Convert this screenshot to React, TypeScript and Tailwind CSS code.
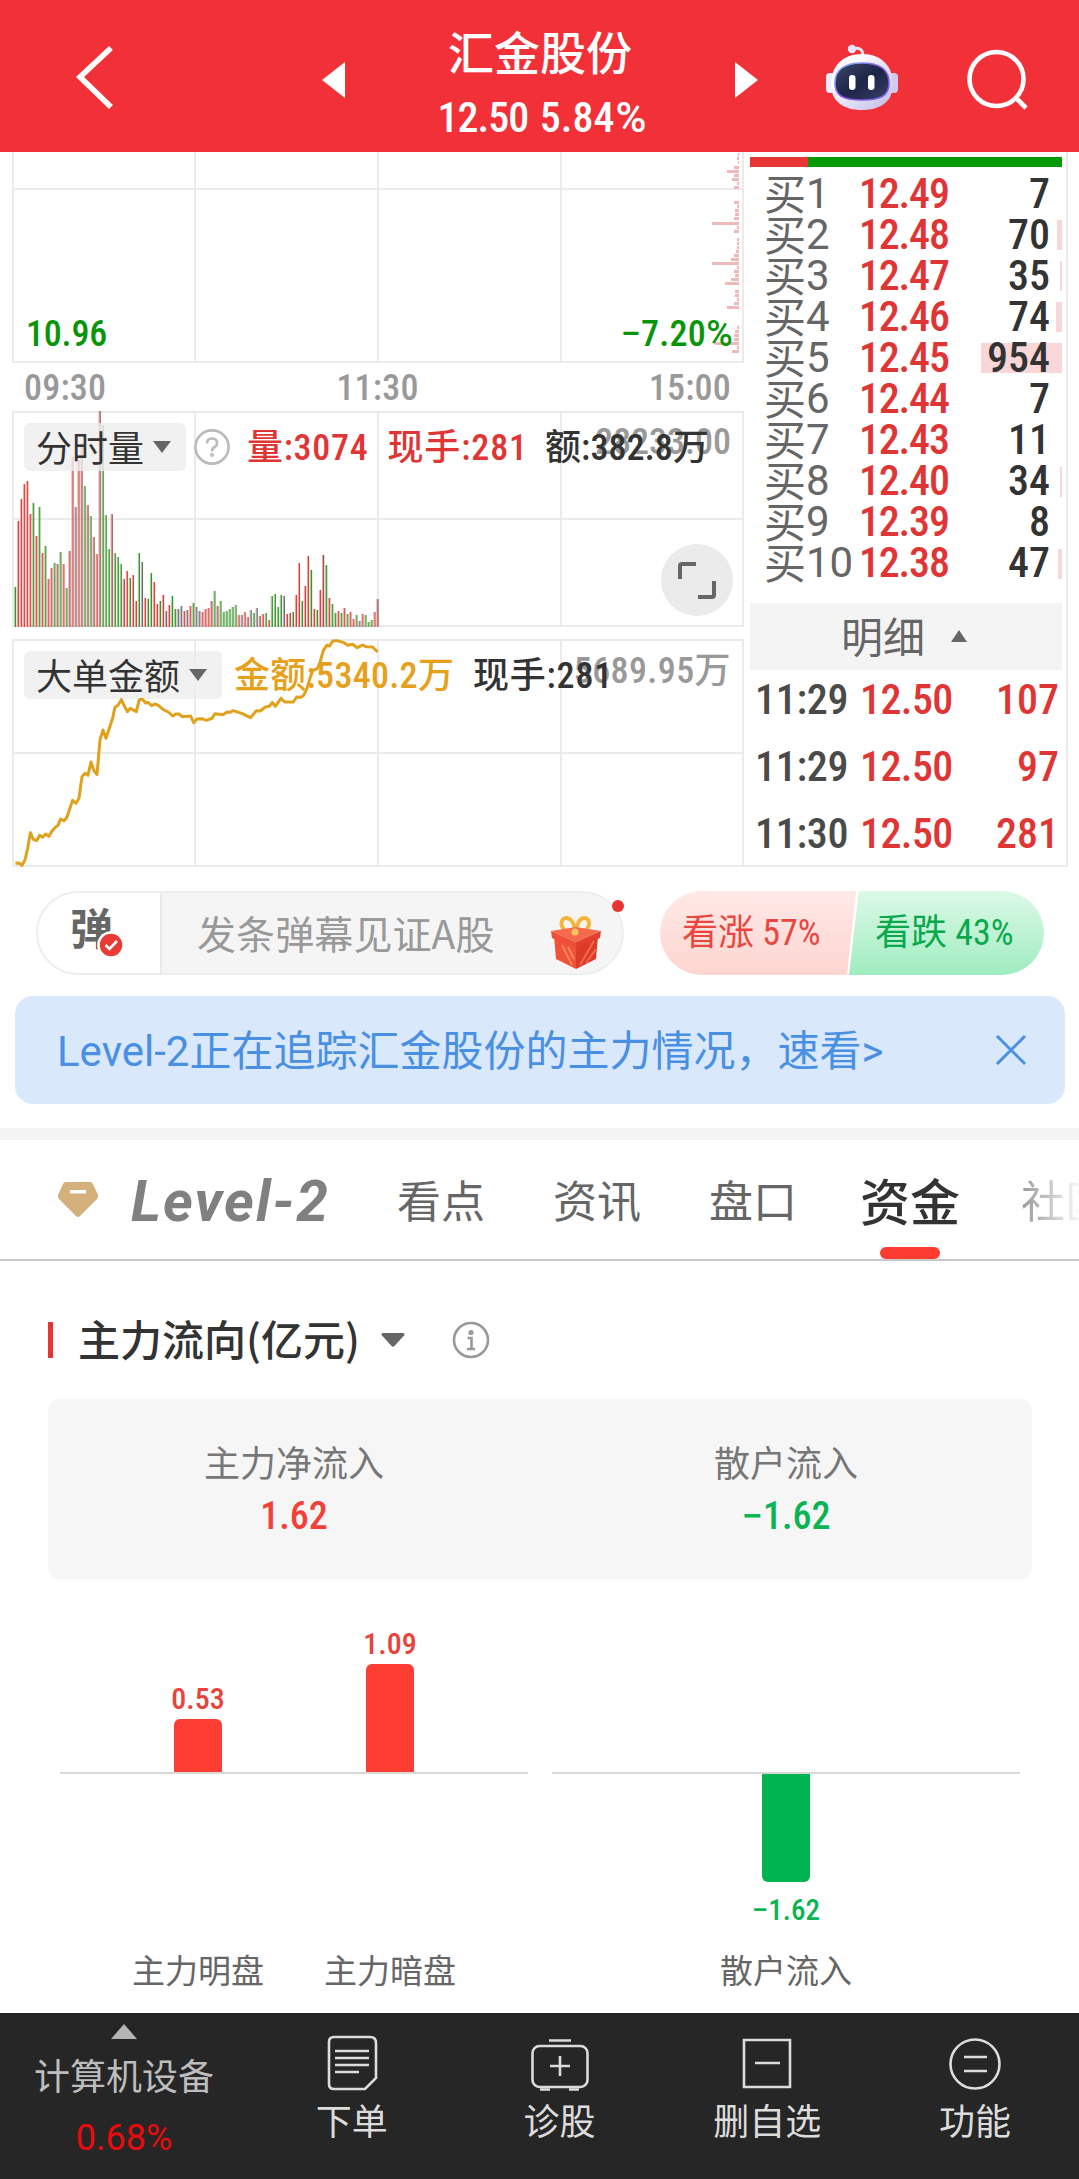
import { Fragment, ReactNode } from "react";

const bids = [
    { level: 1, price: "12.49", qty: 7, bar: 0 },
    { level: 2, price: "12.48", qty: 70, bar: 5 },
    { level: 3, price: "12.47", qty: 35, bar: 2 },
    { level: 4, price: "12.46", qty: 74, bar: 6 },
    { level: 5, price: "12.45", qty: 954, bar: 81 },
    { level: 6, price: "12.44", qty: 7, bar: 0 },
    { level: 7, price: "12.43", qty: 11, bar: 0 },
    { level: 8, price: "12.40", qty: 34, bar: 2 },
    { level: 9, price: "12.39", qty: 8, bar: 0 },
    { level: 10, price: "12.38", qty: 47, bar: 4 },
];

const trades = [
    { time: "11:29", price: "12.50", qty: 107 },
    { time: "11:29", price: "12.50", qty: 97 },
    { time: "11:30", price: "12.50", qty: 281 },
];

// one entry per minute: colour key + height
const volumes =
    "g40 r106 r128 r143 r146 r113 g124 r91 g120 r74 g81 r48 r59 g64 d63 g75 r63 g39 d76 r170 k120 r167 d184 g141 d122 g111 d90 r73 d216 g202 g112 g78 d113 g74 g70 g63 d48 r56 g49 r52 r26 g74 k65 r29 g28 g54 r45 r23 g26 r32 k16 r22 g31 g18 k18 k21 r16 k17 r21 g24 k20 k16 r15 r18 r19 d26 g36 d21 g26 g15 g16 g18 g20 g22 r12 k12 r15 d10 k17 g14 k19 d11 r13 g14 r7 g31 g33 g20 g32 k31 r13 r14 g15 r32 r64 g26 r41 r71 g57 r18 g17 r37 d72 g62 r29 g23 g14 r16 g14 r19 g13 r15 r8 g12 k6 r13 g12 g5 g7 r15 d28".split(" ");

const volumeColors: Record<string, string[]> = {
    r: ["#d9403f", "#f3a8a6"],
    d: ["#a04f50", "#dda3a3"],
    g: ["#3f8f2e", "#a5d79c"],
    k: ["#6d6a70", "#bdbbbf"],
};

const flowLine =
    "46,700 57,699 66,706 75,690 83,655 91,608 100,628 110,632 119,616 128,622 137,612 147,619 156,603 165,593 174,586 182,567 192,572 200,563 210,535 218,511 228,520 237,505 246,440 255,430 264,436 273,396 282,422 291,434 300,330 309,300 318,325 328,295 337,268 345,232 354,226 364,209 373,228 382,245 391,235 400,240 409,245 418,209 428,208 437,219 444,217 455,227 465,222 475,226 490,239 505,246 518,258 527,252 537,252 546,260 572,258 581,278 591,267 606,266 619,271 636,265 645,251 670,254 681,246 690,247 700,242 725,250 752,263 769,242 781,243 796,231 808,229 817,217 826,229 843,205 854,216 880,216 890,201 903,202 911,196 920,178 930,145 938,122 952,116 960,98 970,62 980,46 989,48 998,33 1010,32 1030,37 1043,46 1058,43 1072,53 1088,45 1098,50 1118,51 1133,66";

// [y, length] of the price distribution bars
const distribution = [
    [2, 1], [6, 2], [10, 1], [15, 5], [19, 12], [23, 5], [27, 7], [31, 2], [35, 5], [50, 5], [54, 2], [58, 4], [62, 4], [66, 5], [71, 27], [75, 2],
    [79, 5], [87, 2], [91, 2], [95, 2], [99, 3], [103, 5], [107, 8], [111, 27], [115, 2], [119, 5], [123, 4], [127, 8], [131, 14], [139, 4], [143, 4],
    [147, 2], [151, 5], [155, 12], [175, 2], [179, 4], [183, 5], [187, 5], [191, 24], [195, 2], [199, 7],
];

const Num = ({ className = "font-stretch-[85%]", children }: { className?: string; children: ReactNode }) => (
    <span className={`font-[Roboto,'Noto_Sans_CJK_SC',sans-serif] ${className}`}>{children}</span>
);

const Header = () => {
    return (
        <div className="flex h-[152px] bg-[#f23038] text-white">
            <svg className="ml-[69px] mt-10 h-[74px] w-[50px]" viewBox="0 0 50 74" fill="none">
                <path d="M42 8 L11 37 L42 67" stroke="white" strokeWidth="5.6" />
            </svg>
            <svg className="ml-[203px] mt-[62px] h-9 w-6" viewBox="0 0 24 36">
                <path d="M0 18 L23 0 V36 Z" fill="white" />
            </svg>
            <div className="ml-[44px] flex w-[300px] flex-col items-center pt-[27px]">
                <div className="text-[46px] font-medium leading-[46px]">汇金股份</div>
                <Num className="ml-[4px] mt-[21px] text-[42px] font-medium leading-[48px] font-stretch-[80%]">
                    <span className="tracking-[-1px]">12.50</span>&nbsp;<span className="ml-[2px]">5.84</span><span className="ml-px font-stretch-[105%]">%</span>
                </Num>
            </div>
            <svg className="ml-[45px] mt-[62px] h-9 w-6" viewBox="0 0 24 36">
                <path d="M0 0 L23 18 L0 36 Z" fill="white" />
            </svg>
            <Robot />
            <svg className="ml-[66px] mt-[46px] h-[66px] w-[66px]" viewBox="0 0 66 66" fill="none" stroke="white" strokeWidth="4.6">
                <circle cx="31.5" cy="33" r="27" />
                <path d="M50 51 L61 62" />
            </svg>
        </div>
    );
};

const Robot = () => {
    return (
        <svg className="ml-[66px] mt-[42px] h-[70px] w-[74px]" viewBox="0 0 74 70" fill="none">
            <defs>
                <linearGradient id="shell" x1="0" y1="0" x2="1" y2="1">
                    <stop offset="0.3" stopColor="#fbfaff" />
                    <stop offset="1" stopColor="#bdb9e6" />
                </linearGradient>
                <linearGradient id="rim" x1="0" y1="0" x2="1" y2="1">
                    <stop offset="0" stopColor="#7fd0f2" />
                    <stop offset="0.5" stopColor="#8a4be8" />
                    <stop offset="1" stopColor="#6f62e0" />
                </linearGradient>
                <linearGradient id="visor" x1="0" y1="0" x2="1" y2="1">
                    <stop offset="0" stopColor="#3d4769" />
                    <stop offset="0.5" stopColor="#1d2647" />
                    <stop offset="1" stopColor="#363f66" />
                </linearGradient>
            </defs>
            <path d="M27 7 Q38 4 38 14" stroke="#e4dff5" strokeWidth="3" />
            <circle cx="27" cy="7" r="4.2" fill="#e7e3f8" />
            <rect x="1" y="31" width="9" height="20" rx="4" fill="#f0eefc" />
            <rect x="64" y="31" width="9" height="20" rx="4" fill="#cfcbf0" />
            <path d="M37 12 C57 12 68 25 68 42 C68 60 55 68 37 68 C19 68 6 60 6 42 C6 25 17 12 37 12Z" fill="url(#shell)" />
            <path d="M37 21 C55 21 64 28 64 41 C64 53 57 58 37 58 C17 58 10 53 10 41 C10 28 19 21 37 21Z" fill="url(#visor)" stroke="url(#rim)" strokeWidth="1.6" />
            <rect x="24" y="33" width="6.5" height="15" rx="3.2" fill="white" />
            <rect x="43" y="33" width="6.5" height="15" rx="3.2" fill="white" />
        </svg>
    );
};

const Grid = ({ height, mid, top = true, children }: { height: number; mid: number; top?: boolean; children?: ReactNode }) => {
    return (
        <svg className="block w-[732px]" style={{ height }} viewBox={`0 0 732 ${height}`}>
            <g fill="#ebebeb">
                {[0, 182, 365, 548, 730].map((x) => (
                    <rect key={x} x={x} y="0" width="2" height={height} />
                ))}
                {top && <rect x="0" y="0" width="732" height="2" />}
                <rect x="0" y={mid} width="732" height="2" />
                <rect x="0" y={height - 2} width="732" height="2" />
            </g>
            {children}
        </svg>
    );
};

const Select = ({ label }: { label: string }) => {
    return (
        <div className="flex h-12 items-center rounded-md bg-[#eeeeee]/80 pl-[12px] pr-[15px]">
            <span className="pb-[3px] text-[36px] leading-none text-[#333]">{label}</span>
            <svg className="ml-[9px] h-3 w-[18px]" viewBox="0 0 18 12">
                <path d="M0 0 H18 L9 12 Z" fill="#666" />
            </svg>
        </div>
    );
};

const Charts = () => {
    return (
        <div className="ml-3 w-[732px]">
            <div className="relative">
                <Grid height={211} mid={36} top={false}>
                    {distribution.map(([y, w]) => (
                        <rect key={y} x={727 - w} y={y - 1} width={w} height="3" fill="#efb9bb" />
                    ))}
                </Grid>
                <Num className="absolute bottom-[8px] left-[14px] text-[36px] font-medium leading-[42px] tracking-[-0.2px] text-[#099509] font-stretch-[84%]">10.96</Num>
                <Num className="absolute bottom-[8px] right-[11px] text-[36px] font-medium leading-[42px] tracking-[0.3px] text-[#099509] font-stretch-[84%]">
                    <span className="font-stretch-[100%]">−</span>7.20<span className="font-stretch-[100%]">%</span>
                </Num>
            </div>
            <div className="flex h-12 items-center justify-between pl-3 pr-[13px] pt-[2px] text-[36px] font-medium leading-none tracking-[0.2px] text-[#999]">
                <Num>09:30</Num>
                <Num>11:30</Num>
                <Num>15:00</Num>
            </div>
            <div className="relative">
                <Grid height={216} mid={107}>
                    {volumes.map((v, i) => {
                        const h = Number(v.slice(1));
                        const [dark, light] = volumeColors[v[0]];
                        return (
                            <Fragment key={i}>
                                <rect x={2 + i * 3.02} y={216 - h} width="1" height={h} fill={light} />
                                <rect x={3 + i * 3.02} y={216 - h} width="1.2" height={h} fill={dark} />
                            </Fragment>
                        );
                    })}
                </Grid>
                <div className="absolute left-3 top-3 flex items-center text-[36px] leading-none">
                    <Select label="分时量" />
                    <svg className="ml-2 h-9 w-9" viewBox="0 0 36 36" fill="none" stroke="#bbb" strokeWidth="2.6">
                        <circle cx="18" cy="18" r="16.6" />
                        <path d="M13 14.5 Q13 9.5 18 9.5 Q23 9.5 23 14 Q23 17 20 18.5 Q18 19.5 18 22.5" />
                        <circle cx="18" cy="26" r="0.8" />
                    </svg>
                    <Num className="ml-[17px] whitespace-nowrap pt-px font-medium tracking-[0.7px] text-[#e03535] font-stretch-[85%]">量:3074</Num>
                    <Num className="ml-[19px] whitespace-nowrap pt-px font-medium tracking-[0.9px] text-[#e03535] font-stretch-[85%]">现手:281</Num>
                </div>
                <Num className="absolute right-[13px] top-[10px] text-[36px] font-medium leading-[42px] text-[#999] font-stretch-[84%]">28233.00</Num>
                <Num className="absolute left-[533px] top-[16px] whitespace-nowrap text-[36px] font-medium leading-[42px] tracking-[0.1px] text-[#333] font-stretch-[85%]">额:382.8万</Num>
                <div className="absolute bottom-[11px] right-[11px] h-[72px] w-[72px] rounded-full bg-[#ebebeb]">
                    <svg className="h-full w-full" viewBox="0 0 72 72" fill="none" stroke="#666" strokeWidth="4">
                        <path d="M35 20 H21 Q19 20 19 22 V35" />
                        <path d="M37 53 H51 Q53 53 53 51 V37" />
                    </svg>
                </div>
            </div>
            <div className="relative mt-3">
                <Grid height={228} mid={113} />
                <div className="absolute left-3 top-3 flex items-center text-[36px] leading-none">
                    <Select label="大单金额" />
                    <Num className="ml-[12px] whitespace-nowrap pt-px font-medium tracking-[0.3px] text-[#e6a019] font-stretch-[85%]">金额:5340.2万</Num>
                </div>
                <Num className="absolute right-[13px] top-[11px] whitespace-nowrap text-[36px] font-medium leading-[42px] tracking-[0.4px] text-[#999] font-stretch-[85%]">5689.95万</Num>
                <Num className="absolute left-[461px] top-[16px] whitespace-nowrap text-[36px] font-medium leading-[42px] tracking-[0.8px] text-[#333] font-stretch-[85%]">现手:281</Num>
                <svg className="absolute left-0 top-0 h-[228px] w-[732px]" viewBox="0 0 732 228" fill="none">
                    <polyline points={flowLine} transform="translate(-12 -9) scale(0.3333)" stroke="#e0a11c" strokeWidth="9" strokeLinejoin="round" />
                </svg>
            </div>
        </div>
    );
};

const OrderBook = () => {
    return (
        <div className="flex w-[324px] flex-col border-b-2 border-r-2 border-[#ebebeb] pl-[6px] pr-[4px] pt-[5px]">
            <div className="flex h-[10px] w-[312px] shrink-0">
                <div className="w-[58px] bg-[#e83433]" />
                <div className="flex-1 bg-[#069806]" />
            </div>
            <div className="mt-[6px]">
                {bids.map((bid) => (
                    <div key={bid.level} className="relative flex h-[41.1px] w-[312px] items-center pl-[14px] text-[42px] leading-none">
                        <div className="absolute right-0 top-[6px] h-[30px] bg-[#f9d6d7]" style={{ width: bid.bar }} />
                        <div className="flex w-[95px] items-center whitespace-nowrap text-[#666]">
                            <span className="pb-[4px]">买</span>
                            <Num className="font-stretch-[98%]">{bid.level}</Num>
                        </div>
                        <Num className="font-medium tracking-[-1.2px] text-[#e03535] font-stretch-[79%]">{bid.price}</Num>
                        <Num className="relative ml-auto mr-[12px] font-medium text-[#333] font-stretch-[85%]">{bid.qty}</Num>
                    </div>
                ))}
            </div>
            <div className="mt-[19px] flex h-[67px] w-[312px] shrink-0 items-center bg-[#f4f4f4] pl-[91px]">
                <span className="pb-[2px] text-[42px] leading-none text-[#666]">明细</span>
                <svg className="ml-[26px] h-3 w-4" viewBox="0 0 16 12">
                    <path d="M8 0 L16 12 H0 Z" fill="#666" />
                </svg>
            </div>
            {trades.map((trade, i) => (
                <div key={i} className="flex h-[67px] w-[312px] shrink-0 items-center pb-[7px] pl-[5px] text-[42px] font-medium leading-none">
                    <Num className="w-[105px] tracking-[-0.3px] text-[#4a4a4a] font-stretch-[84%]">{trade.time}</Num>
                    <Num className="tracking-[-0.6px] text-[#e03535] font-stretch-[81%]">{trade.price}</Num>
                    <Num className="ml-auto mr-[3px] text-[#e03535] font-stretch-[85%]">{trade.qty}</Num>
                </div>
            ))}
        </div>
    );
};

const Gift = () => {
    return (
        <svg className="h-[54px] w-[52px]" viewBox="0 0 52 54">
            <path d="M25 18 C8 18 9 2 17 3 C22 4 25 10 25 18 C26 10 30 3 34 3 C42 3 42 18 25 18Z" fill="none" stroke="#f5b53a" strokeWidth="4" />
            <path d="M4 21 L26 31 V54 L6 44Z" fill="#f0523a" />
            <path d="M48 21 L26 31 V54 L46 44Z" fill="#dd3a28" />
            <path d="M1 16 L26 12 L51 16 L26 27Z" fill="#f5694c" />
            <path d="M1 16 L26 27 V33 L2 23Z" fill="#ee4f38" />
            <path d="M51 16 L26 27 V33 L50 23Z" fill="#e2402d" />
            <path d="M12 30 L22 50 M18 32 L24 44" stroke="#f78360" strokeWidth="2" />
            <path d="M44 26 L30 50 M46 34 L36 48" stroke="#f0694c" strokeWidth="2" />
            <circle cx="25" cy="17" r="3.5" fill="#f8c65a" />
        </svg>
    );
};

const CommentBar = () => {
    return (
        <div className="flex pl-9 pt-6">
            <div className="relative flex h-[84px] w-[588px] items-center rounded-full border-2 border-[#eeeeee] bg-[#f5f5f5]">
                <div className="relative flex h-full w-[124px] items-center rounded-l-full border-r-2 border-[#eaeaea] bg-white pl-[32px]">
                    <span className="mb-[13px] text-[43px] font-bold leading-none text-[#666]">弹</span>
                    <svg className="absolute left-[59px] top-[38px] h-7 w-7" viewBox="0 0 28 28">
                        <circle cx="14" cy="14" r="12.5" fill="#e93b35" stroke="white" strokeWidth="2.5" />
                        <path d="M8.5 14 L12.5 18 L20 10" fill="none" stroke="white" strokeWidth="2.6" />
                    </svg>
                </div>
                <span className="ml-[35px] whitespace-nowrap pb-[2px] text-[39px] leading-none tracking-[0.1px] text-[#999]">发条弹幕见证A股</span>
                <div className="absolute left-[512px] top-[22px]">
                    <Gift />
                </div>
                <div className="absolute -right-[2px] top-[7px] h-3 w-3 rounded-full bg-[#e83433]" />
            </div>
            <div className="ml-9 flex h-[84px] w-[384px] text-[36px] leading-none">
                <div className="flex w-[199px] items-center whitespace-nowrap rounded-l-full bg-gradient-to-b from-[#ffe9e7] to-[#fdd5d0] pl-[22px] text-[#e94640] [clip-path:polygon(0_0,98.5%_0,94%_100%,0_100%)]">
                    <Num>看涨 57%</Num>
                </div>
                <div className="-ml-[10px] flex flex-1 items-center whitespace-nowrap rounded-r-full bg-gradient-to-b from-[#dcf9e8] to-[#9fecc0] pl-[26px] text-[#0ba94d] [clip-path:polygon(5%_0,100%_0,100%_100%,0_100%)]">
                    <Num>看跌 43%</Num>
                </div>
            </div>
        </div>
    );
};

const Notice = () => {
    return (
        <div className="mx-[15px] mt-[21px] flex h-[108px] w-[1050px] items-center rounded-[18px] bg-[#dae8fc] pl-[42px] text-[#4a90e2]">
            <Num className="whitespace-nowrap pt-[4px] text-[42px] leading-none">
                Level-2正在追踪汇金股份的主力情况，速看&gt;
            </Num>
            <svg className="ml-auto mr-[38px] h-8 w-8" viewBox="0 0 32 32" fill="none" stroke="#4a90e2" strokeWidth="3">
                <path d="M2 2 L30 30 M30 2 L2 30" />
            </svg>
        </div>
    );
};

const Tabs = () => {
    return (
        <div className="mt-6 overflow-hidden border-t-[12px] border-[#f4f4f4]">
            <div className="flex h-[121px] w-[1200px] border-b-2 border-[#c8c8c8] text-[44px] leading-none text-[#666]">
                <svg className="ml-[57px] mt-[40px] h-10 w-[42px]" viewBox="0 0 42 40">
                    <path d="M9 2 H33 Q35 2 36 4 L41 15 Q41.500 17 40 19 L23 36 Q21 38 19 36 L2 19 Q0.500 17 1 15 L6 4 Q7 2 9 2Z" fill="#d3b07c" />
                    <rect x="13" y="10" width="16" height="3.500" fill="white" />
                </svg>
                <span className="ml-[32px] mt-[33px] w-[266px] whitespace-nowrap font-[Roboto,sans-serif] text-[57px] font-bold italic tracking-[2px] text-[#808080]">Level-2</span>
                <span className="mt-[37px] w-[156px]">看点</span>
                <span className="mt-[37px] w-[156px]">资讯</span>
                <span className="mt-[37px] w-[151px]">盘口</span>
                <div className="flex w-[100px] flex-col items-center justify-between pt-[34px] text-[50px] font-medium text-[#333]">
                    <span>资金</span>
                    <div className="h-3 w-[60px] rounded-t-md rounded-b-md bg-[#fd3b31]" />
                </div>
                <span className="ml-[61px] mt-[37px] bg-gradient-to-r from-[#999] to-white to-[62px] bg-clip-text text-transparent">社区</span>
            </div>
        </div>
    );
};

const Funds = () => {
    return (
        <div className="h-[752px] px-12">
            <div className="flex h-[100px] items-center pt-[57px]">
                <div className="h-9 w-[5px] bg-[#e83433]" />
                <span className="ml-[25px] pb-[3px] text-[42px] font-medium leading-[42px] text-[#333]">主力流向(亿元)</span>
                <svg className="ml-[21px] h-[14px] w-6" viewBox="0 0 24 14">
                    <path d="M2 0 H22 Q24.500 0.500 23 2.500 L13.500 13 Q12 14.500 10.500 13 L1 2.500 Q-0.500 0.500 2 0Z" fill="#666" />
                </svg>
                <svg className="ml-[47px] h-[38px] w-[38px]" viewBox="0 0 38 38" fill="none" stroke="#999" strokeWidth="2.6">
                    <circle cx="19" cy="19" r="17" />
                    <circle cx="19" cy="11.500" r="2.600" fill="#999" stroke="none" />
                    <path d="M15.500 17 H19.500 V28 M15 28 H23" />
                </svg>
            </div>
            <div className="mt-[38px] flex h-[180px] w-[984px] rounded-xl bg-[#f6f6f6] text-center">
                <div className="flex flex-1 flex-col items-center pt-[44px]">
                    <span className="text-[36px] leading-[36px] text-[#777]">主力净流入</span>
                    <Num className="mt-[16px] text-[38px] font-medium leading-[42px] text-[#f3413a] font-stretch-[83%]">1.62</Num>
                </div>
                <div className="flex flex-1 flex-col items-center pt-[44px]">
                    <span className="text-[36px] leading-[36px] text-[#777]">散户流入</span>
                    <Num className="mt-[16px] text-[38px] font-medium leading-[42px] text-[#0ab452] font-stretch-[83%]"><span className="font-stretch-[100%]">−</span>1.62</Num>
                </div>
            </div>
            <div className="flex justify-between px-3">
                <div className="w-[468px]">
                    <div className="flex h-[195px] items-end gap-[84px] border-b-2 border-[#d8d8d8] pl-[84px]">
                        <FlowBar value="0.53" height={53} />
                        <FlowBar value="1.09" height={108} />
                    </div>
                    <div className="mt-[179px] flex gap-[60px] whitespace-nowrap pl-[72px] text-[33px] leading-[33px] text-[#666]">
                        <span>主力明盘</span>
                        <span>主力暗盘</span>
                    </div>
                </div>
                <div className="-mr-px flex w-[468px] flex-col items-center">
                    <div className="mt-[193px] h-[2px] w-full bg-[#d8d8d8]" />
                    <div className="h-[108px] w-12 rounded-b-md bg-[#00b450]" />
                    <Num className="mt-[12px] text-[29px] font-medium leading-[32px] text-[#0ab452] font-stretch-[84%]"><span className="font-stretch-[100%]">−</span>1.62</Num>
                    <span className="mt-[27px] text-[33px] leading-[33px] text-[#666]">散户流入</span>
                </div>
            </div>
        </div>
    );
};

const FlowBar = ({ value, height }: { value: string; height: number }) => (
    <div className="flex w-[108px] flex-col items-center">
        <Num className="mb-[4px] text-[30px] font-medium leading-[32px] text-[#e9433c] font-stretch-[85%]">{value}</Num>
        <div className="w-12 rounded-t-md bg-[#fd3c32]" style={{ height }} />
    </div>
);

const NavItem = ({ label, children }: { label: string; children: ReactNode }) => (
    <div className="flex flex-1 flex-col items-center pt-5">
        <svg className="h-[60px] w-[60px]" viewBox="0 0 60 60" fill="none" stroke="#dcdcdc" strokeWidth="2.6">
            {children}
        </svg>
        <span className="mt-[8px] text-[36px] leading-[36px] text-[#dcdcdc]">{label}</span>
    </div>
);

const BottomNav = () => {
    return (
        <div className="flex h-[166px] bg-[#262626]">
            <div className="flex w-[248px] flex-col items-center pt-[11px]">
                <svg className="h-[15px] w-[26px]" viewBox="0 0 26 15">
                    <path d="M13 0 L26 15 H0Z" fill="#b4b4b4" />
                </svg>
                <span className="mt-[17px] text-[36px] leading-[36px] text-[#bdbdbd]">计算机设备</span>
                <span className="mt-[25px] font-[Roboto,sans-serif] text-[36px] leading-[42px] text-[#e80b0b]">0.68%</span>
            </div>
            <NavItem label="下单">
                <path d="M12 4 H48 Q54 4 54 10 V45 L43 56 H12 Q7 56 7 51 V9 Q7 4 12 4Z" />
                <path d="M13 18 H47 M13 25 H47 M13 32 H47 M13 39 H37" />
            </NavItem>
            <NavItem label="诊股">
                <rect x="2.500" y="13" width="55" height="41" rx="7" />
                <path d="M19 7.500 H41 M10 56.500 H20 M39 56.500 H49 M30 23 V43 M20 33 H40" />
            </NavItem>
            <NavItem label="删自选">
                <path d="M7 7 H53 V54 H7Z M18 30 H43" />
            </NavItem>
            <NavItem label="功能">
                <circle cx="30" cy="31" r="24.500" />
                <path d="M19 24 H42 M19 38 H42" />
            </NavItem>
        </div>
    );
};

const App = () => {
    return (
        <div lang="zh-CN" className="h-[2179px] w-[1079px] overflow-hidden bg-white font-['Noto_Sans_CJK_SC',sans-serif]">
            <Header />
            <div className="flex h-[715px]">
                <Charts />
                <OrderBook />
            </div>
            <CommentBar />
            <Notice />
            <Tabs />
            <Funds />
            <BottomNav />
        </div>
    );
};

export default App;
